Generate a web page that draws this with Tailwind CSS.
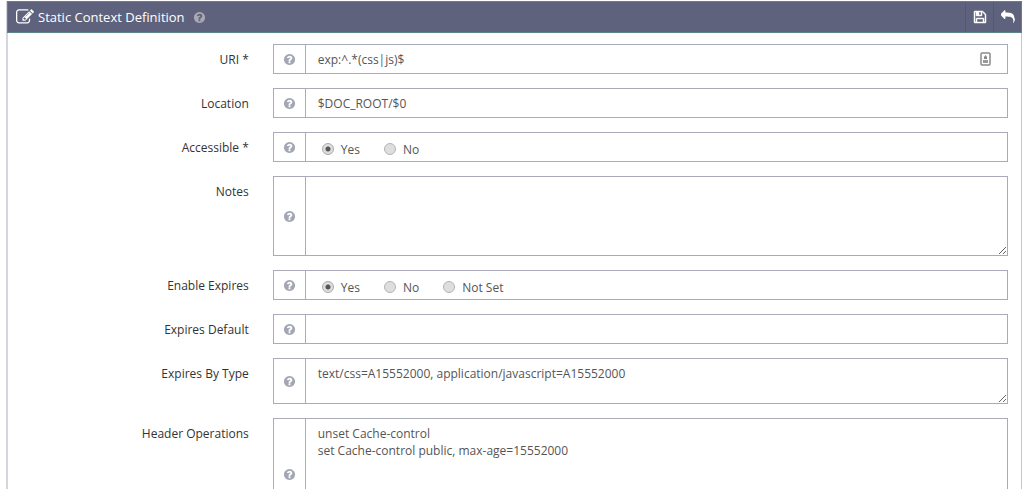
<!DOCTYPE html>
<html lang="en">
<head>
    <meta charset="UTF-8">
    <meta name="viewport" content="width=device-width, initial-scale=1.0">
    <title>Static Context Definition</title>
    <script src="https://cdn.jsdelivr.net/npm/@tailwindcss/browser@4"></script>
</head>
<body class="bg-white font-['Open_Sans',sans-serif] text-[12px] leading-[17px] text-[#333]">
    <svg class="hidden">
        <symbol id="icon-help" viewBox="0 0 1792 1792">
            <path d="M1024 1376v-192q0-14-9-23t-23-9h-192q-14 0-23 9t-9 23v192q0 14 9 23t23 9h192q14 0 23-9t9-23zm256-672q0-88-55.500-163t-138.500-116-170-41q-243 0-371 213-15 24 8 42l132 100q7 6 19 6 16 0 25-12 53-68 86-92 34-24 86-24 48 0 85.500 26t37.500 59q0 38-20 61t-68 45q-63 28-115.500 86.500t-52.500 125.500v36q0 14 9 23t23 9h192q14 0 23-9t9-23q0-19 21.500-49.500t54.500-49.500q32-18 49-28.500t46-35 44.500-48 28-60.500 12.500-81zm384 192q0 209-103 385.500t-279.500 279.500-385.500 103-385.500-103-279.500-279.500-103-385.500 103-385.500 279.500-279.500 385.500-103 385.500 103 279.500 279.500 103 385.500z"/>
        </symbol>
    </svg>

    <main class="mt-px ml-1.5 mr-0.5 border-l-2 border-l-[#d5d5dc] border-r border-r-[#c4c5cd]">
        <header class="-ml-px -mr-px flex h-8 items-stretch border border-[#5c8588] bg-[#5f627c] text-white">
            <h1 class="flex flex-1 items-center pl-2 text-[13px]">
                <svg class="mr-1 size-[18px] fill-current" viewBox="0 0 1792 1792"><path d="M888 1184l116-116-152-152-116 116v56h96v96h56zm440-720q-16-16-33 1l-350 350q-17 17-1 33t33-1l350-350q17-17 1-33zm80 594v190q0 119-84.500 203.500t-203.500 84.500h-832q-119 0-203.500-84.500t-84.500-203.500v-832q0-119 84.500-203.500t203.500-84.500h832q63 0 117 25 15 7 18 23 3 17-9 29l-49 49q-14 14-32 8-23-6-45-6h-832q-66 0-113 47t-47 113v832q0 66 47 113t113 47h832q66 0 113-47t47-113v-126q0-13 9-22l64-64q15-15 35-7t20 29zm-96-738l288 288-672 672h-288v-288zm444 132l-92 92-288-288 92-92q28-28 68-28t68 28l152 152q28 28 28 68t-28 68z"/></svg>
                Static Context Definition
                <svg class="ml-2 size-[13px] fill-[#a9a9b3]"><use href="#icon-help"/></svg>
            </h1>
            <button type="button" aria-label="Save" class="flex w-7 items-center justify-center border-l border-[#565970]">
                <svg class="size-[14px] fill-current stroke-current stroke-[60]" viewBox="0 0 1792 1792"><path d="M512 1536h768v-384h-768v384zm896 0h128v-896q0-14-10-38.500t-20-34.500l-281-281q-10-10-34-20t-39-10v416q0 40-28 68t-68 28h-576q-40 0-68-28t-28-68v-416h-128v1280h128v-416q0-40 28-68t68-28h832q40 0 68 28t28 68v416zm-384-928v-320q0-13-9.500-22.500t-22.500-9.500h-192q-13 0-22.500 9.500t-9.500 22.500v320q0 13 9.500 22.500t22.500 9.500h192q13 0 22.500-9.500t9.500-22.500zm640 32v928q0 40-28 68t-68 28h-1344q-40 0-68-28t-28-68v-1344q0-40 28-68t68-28h928q40 0 88 20t76 48l280 280q28 28 48 76t20 88z"/></svg>
            </button>
            <button type="button" aria-label="Back" class="flex w-7 items-center justify-center border-l border-[#565970]">
                <svg class="size-[14px] fill-current" viewBox="0 0 1792 1792"><path d="M1792 1120q0 166-127 451-3 7-10.500 24t-13.500 30-13 22q-12 17-28 17-15 0-23.500-10t-8.500-25q0-9 2.500-26.500t2.500-23.500q5-68 5-123 0-112-19.500-200.500t-54-153-89-111.500-117-76-147.500-43-170.500-20-195.500-6h-224v256q0 26-19 45t-45 19-45-19l-512-512q-19-19-19-45t19-45l512-512q19-19 45-19t45 19 19 45v256h224q713 0 875 403 53 134 53 333z"/></svg>
            </button>
        </header>

        <form class="flex flex-col gap-3.5 pt-[11px] pr-[13px] pb-3.5 pl-px">
            <div class="flex gap-6">
                <label for="uri" class="w-[24%] pt-[7px] text-right">URI *</label>
                <div class="flex h-[30px] flex-1 border border-[#a9abb8]">
                    <span class="flex w-8 items-center justify-center border-r border-[#a9abb8]"><svg class="size-[13px] fill-[#a3a6b4]"><use href="#icon-help"/></svg></span>
                    <input id="uri" type="text" value="exp:^.*(css|js)$" class="min-w-0 flex-1 px-3 text-[#555] outline-none">
                    <span class="flex items-center pr-4">
                        <svg class="h-[14px] w-[11px]" viewBox="0 0 11 14"><rect x="1" y="1" width="9" height="12" rx="1" fill="#fff" stroke="#8b8b8b" stroke-width="1.500"/><path d="M5.500 3l1.500 2v2H4V5z" fill="#888"/><path d="M3 8h5v3H3z" fill="#999"/></svg>
                    </span>
                </div>
            </div>

            <div class="flex gap-6">
                <label for="location" class="w-[24%] pt-[7px] text-right">Location</label>
                <div class="flex h-[30px] flex-1 border border-[#a9abb8]">
                    <span class="flex w-8 items-center justify-center border-r border-[#a9abb8]"><svg class="size-[13px] fill-[#a3a6b4]"><use href="#icon-help"/></svg></span>
                    <input id="location" type="text" value="$DOC_ROOT/$0" class="min-w-0 flex-1 px-3 text-[#555] outline-none">
                </div>
            </div>

            <div class="flex gap-6" role="radiogroup" aria-labelledby="accessible-label">
                <span id="accessible-label" class="w-[24%] pt-[7px] text-right">Accessible *</span>
                <div class="flex h-[30px] flex-1 border border-[#a9abb8]">
                    <span class="flex w-8 items-center justify-center border-r border-[#a9abb8]"><svg class="size-[13px] fill-[#a3a6b4]"><use href="#icon-help"/></svg></span>
                    <div class="flex items-center gap-6 pt-1 pl-4 text-[#555]">
                        <label class="flex items-center gap-[7px]"><input type="radio" name="accessible" checked class="size-3 appearance-none rounded-full border border-[#aaa] bg-[radial-gradient(circle,#555_2px,#ddd_3px)]">Yes</label>
                        <label class="flex items-center gap-[7px]"><input type="radio" name="accessible" class="size-3 appearance-none rounded-full border border-[#b4b4b4] bg-[#dedede]">No</label>
                    </div>
                </div>
            </div>

            <div class="flex gap-6">
                <label for="notes" class="w-[24%] pt-[7px] text-right">Notes</label>
                <div class="flex flex-1 border border-[#a9abb8]">
                    <span class="flex w-8 items-center justify-center border-r border-[#a9abb8]"><svg class="size-[13px] fill-[#a3a6b4]"><use href="#icon-help"/></svg></span>
                    <textarea id="notes" class="block h-[78px] min-w-0 flex-1 resize px-3 py-1.5 text-[#555] outline-none"></textarea>
                </div>
            </div>

            <div class="flex gap-6" role="radiogroup" aria-labelledby="expires-label">
                <span id="expires-label" class="w-[24%] pt-[7px] text-right">Enable Expires</span>
                <div class="flex h-[30px] flex-1 border border-[#a9abb8]">
                    <span class="flex w-8 items-center justify-center border-r border-[#a9abb8]"><svg class="size-[13px] fill-[#a3a6b4]"><use href="#icon-help"/></svg></span>
                    <div class="flex items-center gap-6 pt-1 pl-4 text-[#555]">
                        <label class="flex items-center gap-[7px]"><input type="radio" name="expires" checked class="size-3 appearance-none rounded-full border border-[#aaa] bg-[radial-gradient(circle,#555_2px,#ddd_3px)]">Yes</label>
                        <label class="flex items-center gap-[7px]"><input type="radio" name="expires" class="size-3 appearance-none rounded-full border border-[#b4b4b4] bg-[#dedede]">No</label>
                        <label class="flex items-center gap-[7px]"><input type="radio" name="expires" class="size-3 appearance-none rounded-full border border-[#b4b4b4] bg-[#dedede]">Not Set</label>
                    </div>
                </div>
            </div>

            <div class="flex gap-6">
                <label for="expires-default" class="w-[24%] pt-[7px] text-right">Expires Default</label>
                <div class="flex h-[30px] flex-1 border border-[#a9abb8]">
                    <span class="flex w-8 items-center justify-center border-r border-[#a9abb8]"><svg class="size-[13px] fill-[#a3a6b4]"><use href="#icon-help"/></svg></span>
                    <input id="expires-default" type="text" class="min-w-0 flex-1 px-3 text-[#555] outline-none">
                </div>
            </div>

            <div class="flex gap-6">
                <label for="expires-type" class="w-[24%] pt-[7px] text-right">Expires By Type</label>
                <div class="flex flex-1 border border-[#a9abb8]">
                    <span class="flex w-8 items-center justify-center border-r border-[#a9abb8]"><svg class="size-[13px] fill-[#a3a6b4]"><use href="#icon-help"/></svg></span>
                    <textarea id="expires-type" class="block h-11 min-w-0 flex-1 resize px-3 py-1.5 text-[#555] outline-none">text/css=A15552000, application/javascript=A15552000</textarea>
                </div>
            </div>

            <div class="flex gap-6">
                <label for="header-ops" class="w-[24%] pt-[7px] text-right">Header Operations</label>
                <div class="flex flex-1 border border-[#a9abb8]">
                    <span class="flex w-8 items-center justify-center border-r border-[#a9abb8]"><svg class="size-[13px] fill-[#a3a6b4]"><use href="#icon-help"/></svg></span>
                    <textarea id="header-ops" class="block h-[110px] min-w-0 flex-1 resize px-3 py-1.5 text-[#555] outline-none">unset Cache-control
set Cache-control public, max-age=15552000</textarea>
                </div>
            </div>
        </form>
    </main>
</body>
</html>
